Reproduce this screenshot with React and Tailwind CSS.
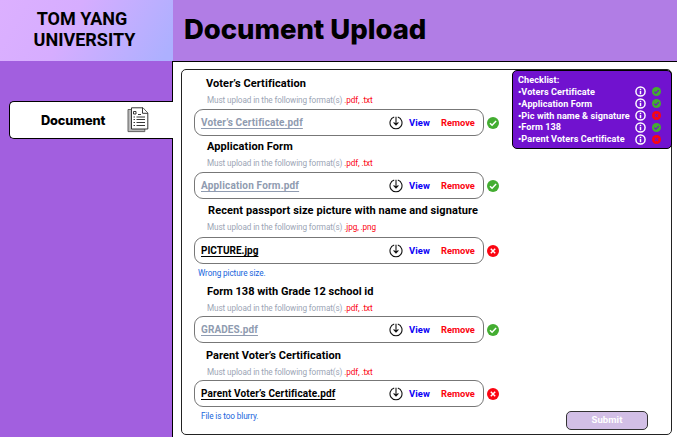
import React from "react";

const files = [
  { title: "Voter’s Certification", titleClass: "ml-[12px] tracking-[0.08px]", formats: ".pdf, .txt", file: "Voter’s Certificate.pdf", fileClass: "text-[#8f9bb0] tracking-[0.14px]", ok: true, height: "h-[63px]", gap: "h-[18px]" },
  { title: "Application Form", titleClass: "ml-[13px] tracking-[0.08px]", formats: ".pdf, .txt", file: "Application Form.pdf", fileClass: "text-[#8f9bb0] tracking-[0.18px]", ok: true, height: "h-[64px]", gap: "h-[18px]" },
  { title: "Recent passport size picture with name and signature", titleClass: "ml-[14px] tracking-[0.09px]", formats: ".jpg, .png", file: "PICTURE.jpg", fileClass: "text-black", ok: false, message: "Wrong picture size.", messageClass: "ml-[4px]", height: "h-[81px]", gap: "h-[19px]" },
  { title: "Form 138 with Grade 12 school id", titleClass: "ml-[13px] tracking-[0.02px]", formats: ".pdf, .txt", file: "GRADES.pdf", fileClass: "text-[#8f9bb0] tracking-[0.1px]", ok: true, height: "h-[64px]", gap: "h-[17px]" },
  { title: "Parent Voter’s Certification", titleClass: "ml-[12px] tracking-[0.04px]", formats: ".pdf, .txt", file: "Parent Voter’s Certificate.pdf", fileClass: "text-black tracking-[0.12px]", ok: false, message: "File is too blurry.", messageClass: "ml-[7px]", height: "h-[78px]", gap: "h-[17px]" },
];

const checklist = [
  ["Voters Certificate", true],
  ["Application Form", true],
  ["Pic with name & signature", false],
  ["Form 138", true],
  ["Parent Voters Certificate", false],
];

function Status({ ok, className, mark = "#fff" }) {
  return (
    <svg viewBox="0 0 12 12" className={className}>
      <circle cx="6" cy="6" r="6" fill={ok ? "#43ad31" : "#fb0511"} />
      <path d={ok ? "M3 6.2 5.1 8.2 9.1 4.1" : "M3.8 3.8 8.2 8.2M8.2 3.8 3.8 8.2"} fill="none" stroke={mark} strokeWidth="1.5" />
    </svg>
  );
}

function Download() {
  return (
    <svg viewBox="0 0 14 14" className="h-[14px] w-[14px] shrink-0" fill="none" stroke="#111" strokeWidth="1.1">
      <path d="M5.2 1.1A6 6 0 1 0 8.8 1.1M7 .8V9M4.6 6.4 7 8.9 9.4 6.4" />
    </svg>
  );
}

function Info() {
  return (
    <svg viewBox="0 0 12 12" className="h-[11px] w-[11px] shrink-0" fill="none" stroke="#fff">
      <circle cx="6" cy="6" r="5" strokeWidth="1.6" />
      <path d="M6 5.2V9M6 3V4.4" strokeWidth="1.6" />
    </svg>
  );
}

function Documents() {
  return (
    <svg viewBox="0 0 22 26" className="h-[26px] w-[22px]" fill="#fff" stroke="#222" strokeWidth="0.9">
      <path d="M4 2.5H1V24.6H17.8V22" fill="#bbb" stroke="#555" />
      <path d="M4.5.8H16L20.8 6V22H4.5Z" />
      <path d="M15.5.8V6.3H20.8" />
      <path d="M6.5 4.5H9V7H6.5ZM11 7.5H14M6.5 10H8M9.5 10H18M6.5 12.5H8M9.5 12.5H18M6.5 15.5H8M9.5 15.5H18M6.5 18.5H8M9.5 18.5H18" fill="none" />
    </svg>
  );
}

function FileField({ item }) {
  return (
    <section className={`${item.height} shrink-0`}>
      <h2 className={`h-[14px] text-[11px] font-bold leading-[14px] whitespace-nowrap ${item.titleClass}`}>{item.title}</h2>
      <div className={`${item.gap} ml-[13px] pt-[3px] text-[8.2px] leading-[12px] whitespace-nowrap text-[#9ca5b5] tracking-[-0.11px]`}>
        Must upload in the following format(s) <span className="text-[#fb0511]">{item.formats}</span>
      </div>
      <div className="flex items-center">
        <div className="flex h-[27px] w-[290px] shrink-0 items-center rounded-[9px] border border-[#777] pl-[6px]">
          <span className={`w-[188px] text-[10px] font-bold underline underline-offset-2 whitespace-nowrap ${item.fileClass}`}>{item.file}</span>
          <Download />
          <span className="ml-[6px] w-[32px] pt-px text-[9.4px] font-bold tracking-[0.1px] text-[#0b00f5]">View</span>
          <span className="text-[9.3px] font-bold text-[#fb0511]">Remove</span>
        </div>
        <Status ok={item.ok} className="ml-[3px] h-[12px] w-[12px]" />
      </div>
      {item.message && <p className={`mt-[3px] text-[8.2px] leading-[12px] tracking-[-0.11px] text-[#1764dc] ${item.messageClass}`}>{item.message}</p>}
    </section>
  );
}

export default function App() {
  return (
    <div className="flex h-[437px] w-[677px] flex-col overflow-hidden bg-white font-['Roboto',sans-serif] text-black">
      <header className="flex h-[61px] shrink-0">
        <div className="flex w-[173px] flex-col items-center bg-[linear-gradient(120deg,#dcb0ff_0%,#d6adff_40%,#adb0ff_95%)] pt-[8px] pr-[4px] text-[18px] leading-[21px] font-bold">
          <span className="mr-[5px]">TOM YANG</span>
          <span>UNIVERSITY</span>
        </div>
        <h1 className="flex-1 bg-[#b17de5] pt-[12px] pl-[11px] font-['Inter',sans-serif] text-[27.5px] leading-[34px] font-extrabold tracking-[-0.05px]">Document Upload</h1>
      </header>
      <div className="flex min-h-0 flex-1">
        <aside className="w-[172px] shrink-0 bg-[#a25fdf] pt-[40px] pl-[9px]">
          <div className="relative z-10 flex h-[38px] w-[164px] items-center rounded-l-[5px] border border-r-0 border-black bg-white pl-[31px]">
            <span className="w-[86px] pt-px font-['Inter',sans-serif] text-[12.8px] font-extrabold tracking-[-0.15px]">Document</span>
            <Documents />
          </div>
        </aside>
        <main className="flex-1 border-t border-l border-black pt-[7px] pl-[8px]">
          <div className="flex h-[366px] w-[491px] rounded-[5px] border border-[#222]">
            <div className="w-[330px] shrink-0 pt-[7px] pl-[12px]">
              {files.map((item) => <FileField key={item.title} item={item} />)}
            </div>
            <div className="flex w-[160px] shrink-0 flex-col">
              <div className="h-[79px] rounded-[5px] border border-black bg-[#7112cf] pt-[3px] pl-[5px] text-[9.1px] leading-[12px] font-bold tracking-[0.07px] text-white">
                <div>Checklist:</div>
                {checklist.map(([label, ok]) => (
                  <div key={label} className="flex h-[11.8px] items-center">
                    <span className="w-[117px] whitespace-nowrap">•{label}</span>
                    <Info />
                    <Status ok={ok} mark="#7112cf" className="ml-[6px] h-[9px] w-[9px]" />
                  </div>
                ))}
              </div>
              <button className="mt-auto mb-[4px] ml-[54px] h-[19px] w-[82px] rounded-[5px] border border-[#333] bg-[#d2bfe6] text-[9.5px] font-bold tracking-[0.1px] text-white">Submit</button>
            </div>
          </div>
        </main>
      </div>
    </div>
  );
}
